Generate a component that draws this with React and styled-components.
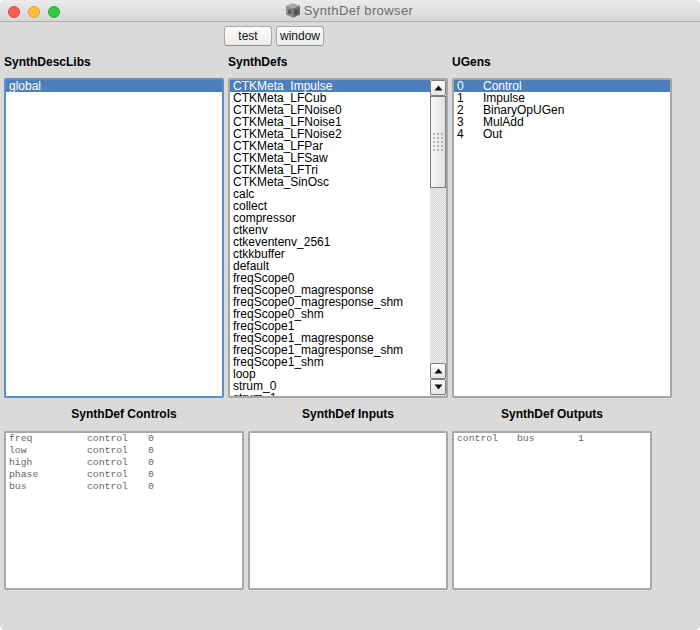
import React from "react";
import styled, { createGlobalStyle } from "styled-components";

const Global = createGlobalStyle`
  html, body { margin: 0; padding: 0; background: #fff; }
  body { font-family: "Liberation Sans", Arial, sans-serif; }
`;

const Window = styled.div`
  width: 700px;
  height: 630px;
  background: #dadada;
  border-radius: 5px;
  overflow: hidden;
  display: flex;
  flex-direction: column;
`;

const TitleBar = styled.div`
  height: 21px;
  flex: none;
  position: relative;
  display: flex;
  align-items: center;
  justify-content: center;
  gap: 3px;
  padding-right: 2px;
  background: linear-gradient(#ebebeb, #d6d6d6);
  border-bottom: 1px solid #b1b1b1;
  font-size: 13px;
  letter-spacing: 0.38px;
  color: #6d6d6d;
`;

const Lights = styled.div`
  position: absolute;
  left: 8px;
  top: 6px;
  display: flex;
  gap: 8px;
`;

const Light = styled.span`
  width: 12px;
  height: 12px;
  border-radius: 50%;
  background: ${(p) => p.$color};
  box-sizing: border-box;
  border: 1px solid ${(p) => p.$edge};
`;

const Toolbar = styled.div`
  display: flex;
  gap: 4px;
  margin: 4px 0 0 224px;
  height: 20px;
`;

const Button = styled.button`
  width: 48px;
  height: 20px;
  padding: 0;
  box-sizing: border-box;
  background: linear-gradient(#fbfbfb, #ececec);
  border: 1px solid #a9a9a9;
  border-bottom-color: #8f8f8f;
  border-radius: 3px;
  font-family: inherit;
  font-size: 12px;
  line-height: 16px;
  color: #111;
`;

const Labels = styled.div`
  display: grid;
  grid-template-columns: 220px 220px 220px;
  column-gap: 4px;
  margin: 8px 0 0 4px;
  height: 17px;
`;

const Label = styled.div`
  font-size: 12px;
  font-weight: bold;
  line-height: 17px;
  color: #000;
`;

const Lists = styled.div`
  display: grid;
  grid-template-columns: 220px 220px 220px;
  column-gap: 4px;
  margin: 7px 0 0 4px;
  height: 320px;
`;

const ListBox = styled.div`
  box-sizing: border-box;
  height: 320px;
  background: #fff;
  border: 2px solid ${(p) => (p.$focused ? "#5f8ec6" : "#a6a6a6")};
  border-radius: 2px;
  overflow: hidden;
  display: flex;
`;

const Rows = styled.div`
  flex: 1;
  min-width: 0;
  overflow: hidden;
`;

const Row = styled.div`
  height: 12px;
  line-height: 12px;
  font-size: 12px;
  padding-left: 3px;
  white-space: pre;
  color: ${(p) => (p.$selected ? "#fff" : "#000")};
  background: ${(p) => (p.$selected ? "#4c7fbe" : "transparent")};
  display: flex;
`;

const Index = styled.span`
  width: 26px;
`;

const Scrollbar = styled.div`
  position: relative;
  flex: none;
  width: 16px;
  background: repeating-conic-gradient(#d2d2d2 0% 25%, #f2f2f2 0% 50%) 0 0 / 2px 2px;
`;

const ArrowButton = styled.div`
  position: absolute;
  left: 0;
  width: 16px;
  height: 16px;
  box-sizing: border-box;
  background: linear-gradient(#fdfdfd, #e6e6e6);
  border: 1px solid #7d7d7d;
  border-radius: 2px;
  display: flex;
  align-items: center;
  justify-content: center;
  top: ${(p) => (p.$top !== undefined ? `${p.$top}px` : "auto")};
  bottom: ${(p) => (p.$bottom !== undefined ? `${p.$bottom}px` : "auto")};
`;

const Thumb = styled.div`
  position: absolute;
  left: 0;
  top: 16px;
  width: 16px;
  height: 92px;
  box-sizing: border-box;
  background: linear-gradient(90deg, #f6f6f6, #e2e2e2);
  border: 1px solid #7d7d7d;
  display: flex;
  align-items: center;
  justify-content: center;
`;

const Arrow = ({ down }) => (
  <svg width="9" height="6" viewBox="0 0 9 6">
    <path d={down ? "M0.5 0.5H8.5L4.5 5.5Z" : "M4.5 0.5L8.5 5.5H0.5Z"} fill="#111" />
  </svg>
);

const Grip = () => (
  <svg width="10" height="18" viewBox="0 0 10 18">
    {[0, 1, 2, 3, 4].map((r) =>
      [0, 1, 2].map((c) => (
        <rect key={`${r}-${c}`} x={c * 4} y={r * 4} width="2" height="2" fill="#b4b4b4" />
      ))
    )}
  </svg>
);

const SectionHeads = styled.div`
  display: grid;
  grid-template-columns: 240px 200px 200px;
  column-gap: 4px;
  margin: 8px 0 0 4px;
  height: 17px;
`;

const SectionHead = styled(Label)`
  text-align: center;
`;

const Panels = styled.div`
  display: grid;
  grid-template-columns: 240px 200px 200px;
  column-gap: 4px;
  margin: 8px 0 0 4px;
`;

const Panel = styled.div`
  box-sizing: border-box;
  height: 159px;
  background: #fff;
  border: 2px solid #a8a8a8;
  border-radius: 2px;
  padding: 0 0 0 3px;
`;

const PanelRow = styled.div`
  display: grid;
  grid-template-columns: ${(p) => p.$columns};
  font-family: "Liberation Mono", "Courier New", monospace;
  font-size: 9.75px;
  line-height: 12px;
  color: #666;
  white-space: pre;
`;

const CubeIcon = () => (
  <svg width="16" height="15" viewBox="0 0 16 15">
    <path d="M1 3L8 0.5L15 3V11.5L8 14.5L1 11.5Z" fill="#7a7a7a" />
    <path d="M1 3L8 5.5V14.5L1 11.5Z" fill="#8f8f8f" />
    <path d="M8 5.5L15 3V11.5L8 14.5Z" fill="#6a6a6a" />
    <path d="M1 3L8 0.5L15 3L8 5.5Z" fill="#a9a9a9" />
    <path d="M3 6.5H6.5V11H3Z M9.5 7H13V11H9.5Z" fill="#3f3f3f" opacity="0.65" />
  </svg>
);

const defs = [
  "CTKMeta_Impulse", "CTKMeta_LFCub", "CTKMeta_LFNoise0", "CTKMeta_LFNoise1", "CTKMeta_LFNoise2",
  "CTKMeta_LFPar", "CTKMeta_LFSaw", "CTKMeta_LFTri", "CTKMeta_SinOsc", "calc", "collect",
  "compressor", "ctkenv", "ctkeventenv_2561", "ctkkbuffer", "default", "freqScope0",
  "freqScope0_magresponse", "freqScope0_magresponse_shm", "freqScope0_shm", "freqScope1",
  "freqScope1_magresponse", "freqScope1_magresponse_shm", "freqScope1_shm", "loop", "strum_0", "strum_1",
];

const ugens = ["Control", "Impulse", "BinaryOpUGen", "MulAdd", "Out"];

const controls = ["freq", "low", "high", "phase", "bus"];

export default function App() {
  return (
    <>
      <Global />
      <Window>
        <TitleBar>
          <Lights>
            <Light $color="#fc5b57" $edge="#e5453f" />
            <Light $color="#fdbc40" $edge="#dfa023" />
            <Light $color="#34c84a" $edge="#27aa35" />
          </Lights>
          <CubeIcon />
          SynthDef browser
        </TitleBar>
        <Toolbar>
          <Button>test</Button>
          <Button>window</Button>
        </Toolbar>
        <Labels>
          <Label>SynthDescLibs</Label>
          <Label>SynthDefs</Label>
          <Label>UGens</Label>
        </Labels>
        <Lists>
          <ListBox $focused>
            <Rows>
              <Row $selected>global</Row>
            </Rows>
          </ListBox>
          <ListBox>
            <Rows>
              {defs.map((d, i) => (
                <Row key={d} $selected={i === 0}>{d}</Row>
              ))}
            </Rows>
            <Scrollbar>
              <ArrowButton $top={0}><Arrow /></ArrowButton>
              <Thumb><Grip /></Thumb>
              <ArrowButton $bottom={17}><Arrow /></ArrowButton>
              <ArrowButton $bottom={1}><Arrow down /></ArrowButton>
            </Scrollbar>
          </ListBox>
          <ListBox>
            <Rows>
              {ugens.map((u, i) => (
                <Row key={u} $selected={i === 0}>
                  <Index>{i}</Index>
                  {u}
                </Row>
              ))}
            </Rows>
          </ListBox>
        </Lists>
        <SectionHeads>
          <SectionHead>SynthDef Controls</SectionHead>
          <SectionHead>SynthDef Inputs</SectionHead>
          <SectionHead>SynthDef Outputs</SectionHead>
        </SectionHeads>
        <Panels>
          <Panel>
            {controls.map((c) => (
              <PanelRow key={c} $columns="78px 61px 1fr">
                <span>{c}</span>
                <span>control</span>
                <span>0</span>
              </PanelRow>
            ))}
          </Panel>
          <Panel />
          <Panel>
            <PanelRow $columns="60px 61px 1fr">
              <span>control</span>
              <span>bus</span>
              <span>1</span>
            </PanelRow>
          </Panel>
        </Panels>
      </Window>
    </>
  );
}
